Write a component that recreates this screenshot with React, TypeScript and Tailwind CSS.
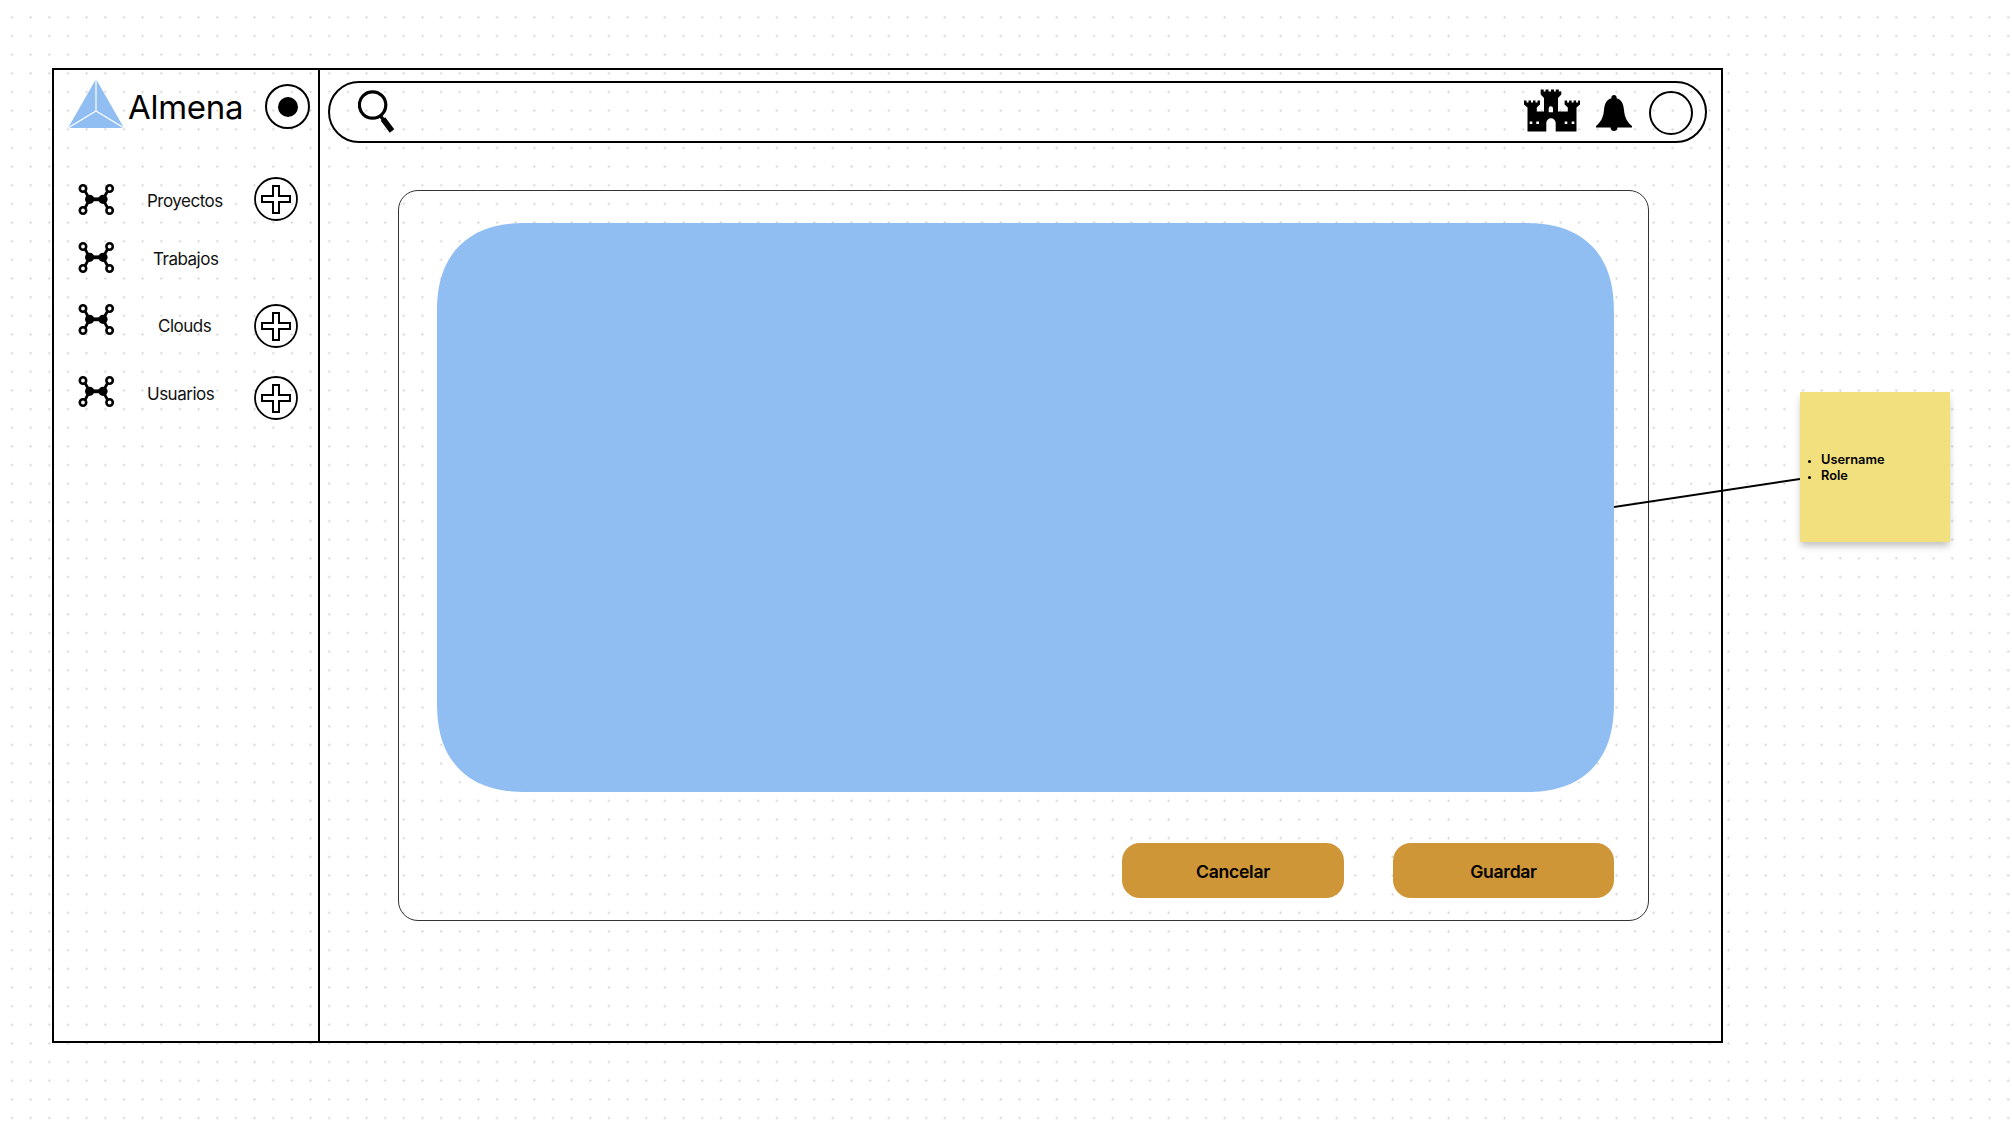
function NetworkIcon() {
  return (
    <svg width="37" height="31" viewBox="0 0 37 31" fill="none" stroke="black" className="shrink-0">
      <path d="M7 7L11.6 15.3L7 24M29.6 7L25 15.3L29.6 24" strokeWidth="2.8" />
      <path d="M11.6 15.3H25" strokeWidth="3.8" />
      <circle cx="5" cy="4.5" r="3.2" strokeWidth="2.6" />
      <circle cx="31.6" cy="4.5" r="3.2" strokeWidth="2.6" />
      <circle cx="5" cy="26.5" r="3.2" strokeWidth="2.6" />
      <circle cx="31.6" cy="26.5" r="3.2" strokeWidth="2.6" />
      <circle cx="11.6" cy="15.3" r="4.6" fill="black" stroke="none" />
      <circle cx="25" cy="15.3" r="4.6" fill="black" stroke="none" />
    </svg>
  )
}

function PlusIcon() {
  return (
    <svg width="44" height="44" viewBox="0 0 44 44" fill="none" stroke="black" strokeWidth="1.8" className="shrink-0">
      <circle cx="22" cy="22" r="21" />
      <path d="M19 9H25V19H36V25H25V36H19V25H8V19H19Z" strokeWidth="2" />
    </svg>
  )
}

function Logo() {
  return (
    <svg width="56" height="49" viewBox="0 0 56 49" className="shrink-0">
      <path d="M28 0L56 49H0Z" fill="#90bef2" />
      <path d="M28 0V32M28 32L0 49M28 32L56 49" stroke="white" strokeWidth="1.2" fill="none" />
    </svg>
  )
}

function SearchIcon() {
  return (
    <svg width="38" height="44" viewBox="0 0 38 44" fill="none" stroke="black" className="shrink-0">
      <circle cx="14.6" cy="15" r="13.2" strokeWidth="3.2" />
      <path d="M22.5 26L26 30.5" strokeWidth="3.4" />
      <path d="M25 29L34 41" strokeWidth="5.6" />
    </svg>
  )
}

function CastleIcon() {
  return (
    <svg width="56" height="43" viewBox="0 0 56 42" fill="black" fillRule="evenodd" className="shrink-0">
      <path d="M0 11h2.5v2h2v-2h2.5v2h2v-2h2.5v2h2v-2h2.5v4l-3.2 3v4H20V8.5L16.7 5V0h3v2h1.8V0h3v2H27V0h3v2h1.8V0h3v2H37.3V5L34 8.5V22h9.8v-4l-3.2-3v-4h2.5v2h2v-2h2.5v2h2v-2h2.5v2h2v-2H56v4l-3.5 3V42H31.7V33.5a4.7 4.7 0 0 0-9.4 0V42H3.5V18L0 15Z" />
      <path d="M24.7 22.7V19a2.15 2.15 0 0 1 4.3 0v3.7ZM5.7 32h2.6v2.4H5.7ZM12.3 32H15v2.4h-2.7ZM40.7 32h2.6v2.4h-2.6ZM47.7 32h2.6v2.4h-2.6Z" fill="white" />
    </svg>
  )
}

function BellIcon() {
  return (
    <svg width="36" height="36" viewBox="0 0 36 36" fill="black" className="shrink-0">
      <circle cx="18" cy="2.6" r="2.6" />
      <circle cx="18" cy="32.6" r="3.4" />
      <path d="M18 3C10.5 3 8.6 9 8 15C7.4 22 5 27 0 31V32.5H36V31C31 27 28.6 22 28 15C27.4 9 25.5 3 18 3Z" />
    </svg>
  )
}

type RowProps = {
  label: string
  labelClass: string
  rowClass: string
  iconClass?: string
  showPlus?: boolean
}

function NavRow({ label, labelClass, rowClass, iconClass = "", showPlus = true }: RowProps) {
  return (
    <div className={`flex items-start h-[44px] pl-[24px] ${rowClass}`}>
      <div className={iconClass}>
        <NetworkIcon />
      </div>
      <span className={`text-[17px] leading-[22px] tracking-[-0.5px] text-[#111111] whitespace-nowrap ${labelClass}`}>{label}</span>
      {showPlus && (
        <div className="ml-auto mr-[20px]">
          <PlusIcon />
        </div>
      )}
    </div>
  )
}

export default function App() {
  return (
    <div className="relative w-[2012px] h-[1130px] overflow-hidden bg-white pt-[68px] pl-[52px] font-['Inter',sans-serif] bg-[radial-gradient(circle,#d6d6d6_0.9px,transparent_1.3px)] bg-[size:18.67px_18.67px] bg-[position:2.67px_8px]">
      <div className="flex w-[1671px] h-[975px] border-2 border-black">
        {/* Sidebar */}
        <aside className="w-[266px] shrink-0 border-r-2 border-black">
          <div className="flex items-start pl-[14px] pt-[9px] h-[107px]">
            <Logo />
            <span className="ml-[4px] mt-[6px] text-[33px] leading-[44px] tracking-[-0.3px] text-black">Almena</span>
            <div className="ml-auto mr-[8px] mt-[5px] flex items-center justify-center w-[45px] h-[45px] rounded-full border-2 border-black">
              <div className="w-[20px] h-[20px] rounded-full bg-black" />
            </div>
          </div>
          <NavRow label="Proyectos" labelClass="ml-[32px] mt-[13px]" rowClass="" iconClass="mt-[7px]" />
          <NavRow label="Trabajos" labelClass="ml-[38px] mt-[12px]" rowClass="mt-[15px]" iconClass="mt-[6px]" showPlus={false} />
          <NavRow label="Clouds" labelClass="ml-[43px] mt-[11px]" rowClass="mt-[24px]" iconClass="mt-[0px]" />
          <NavRow label="Usuarios" labelClass="ml-[32px] mt-[7px]" rowClass="mt-[28px]" iconClass="mt-[0px]" />
        </aside>

        {/* Main */}
        <main className="flex-1 pl-[8px] pr-[14px] pt-[11px]">
          <div className="flex items-center h-[62px] rounded-[31px] border-2 border-black pl-[28px] pr-[12px]">
            <SearchIcon />
            <div className="ml-auto mb-[3px]">
              <CastleIcon />
            </div>
            <div className="ml-[16px] mt-[1px]">
              <BellIcon />
            </div>
            <div className="ml-[17px] mt-[1px] w-[44px] h-[44px] rounded-full border-2 border-black" />
          </div>

          <div className="mt-[47px] ml-[70px] w-[1251px] h-[731px] rounded-[20px] border border-[#333333] pt-[32px] pl-[38px] pr-[34px]">
            <div className="h-[569px] rounded-[90px] [corner-shape:superellipse(1.26)] bg-[#90bef2]" />
            <div className="flex justify-end gap-[49px] mt-[51px]">
              <button className="w-[222px] h-[55px] pt-[3px] rounded-[18px] bg-[#cf9638] text-[17.6px] font-semibold tracking-[-0.3px] text-black">Cancelar</button>
              <button className="w-[221px] h-[55px] pt-[3px] rounded-[18px] bg-[#cf9638] text-[17.6px] font-semibold tracking-[-0.3px] text-black">Guardar</button>
            </div>
          </div>
        </main>
      </div>

      {/* Connector from the blue panel to the sticky note */}
      <svg className="absolute left-[1614px] top-[478px]" width="186" height="30" viewBox="0 0 186 30">
        <path d="M0 29L186 1" stroke="black" strokeWidth="2" />
      </svg>

      {/* Sticky note */}
      <div className="absolute left-[1800px] top-[392px] flex w-[150px] h-[150px] items-center bg-[#f2e07f] pl-[21px] shadow-[0_5px_7px_-1px_rgba(0,0,0,0.25)]">
        <ul className="list-disc pl-0 text-[12.8px] font-semibold leading-[16.5px] text-black marker:text-[10px] translate-y-[1px]">
          <li>Username</li>
          <li>Role</li>
        </ul>
      </div>
    </div>
  )
}
